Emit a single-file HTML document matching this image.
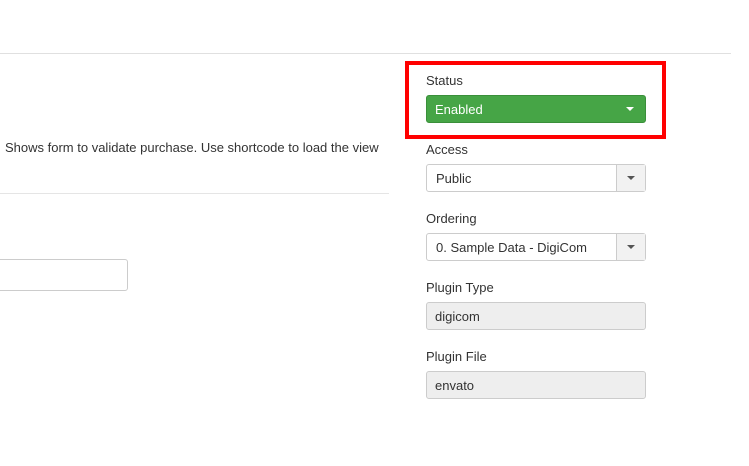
<!DOCTYPE html><html><head><style>
body{margin:0;width:749px;height:466px;background:#fff;font-family:"Liberation Sans",sans-serif;font-size:13px;color:#333;position:relative;overflow:hidden}
.a{position:absolute}
.lbl{position:absolute;left:426px;font-size:13px;color:#333}
.sel{position:absolute;left:426px;width:218px;height:26px;border:1px solid #ccc;border-radius:3px;box-sizing:content-box;background:#fff}
.sel span{position:absolute;left:9px;top:6px}
.sel .btn{position:absolute;right:0;top:0;width:28px;height:26px;border-left:1px solid #ccc;background:#f2f2f2}
.sel .btn:after{content:"";position:absolute;left:10px;top:11px;border-left:4px solid transparent;border-right:4px solid transparent;border-top:4px solid #555}
.ro{position:absolute;left:426px;width:218px;height:26px;border:1px solid #ccc;border-radius:3px;background:#eee}
.ro span{position:absolute;left:8px;top:6px}
</style></head><body>
<div class="a" style="left:0;top:53px;width:731px;height:1px;background:#e0e0e0"></div>
<div class="a" style="left:5px;top:140px;color:#333">Shows form to validate purchase. Use shortcode to load the view</div>
<div class="a" style="left:0;top:193px;width:389px;height:1px;background:#e5e5e5"></div>
<div class="a" style="left:-4px;top:259px;width:130px;height:30px;border:1px solid #ccc;border-radius:3px"></div>
<div class="a" style="left:405px;top:61px;width:253px;height:70px;border:4px solid #f00"></div>
<div class="lbl" style="top:73px">Status</div>
<div class="a" style="left:426px;top:95px;width:218px;height:26px;background:#46a546;border:1px solid #3a8f3a;border-radius:3px;color:#fff">
<span class="a" style="left:8px;top:6px;color:#fff">Enabled</span>
<span class="a" style="right:11px;top:11px;border-left:4px solid transparent;border-right:4px solid transparent;border-top:4px solid #fff;width:0;height:0"></span></div>
<div class="lbl" style="top:142px">Access</div>
<div class="sel" style="top:164px"><span>Public</span><div class="btn"></div></div>
<div class="lbl" style="top:211px">Ordering</div>
<div class="sel" style="top:233px"><span>0. Sample Data - DigiCom</span><div class="btn"></div></div>
<div class="lbl" style="top:280px">Plugin Type</div>
<div class="ro" style="top:302px"><span>digicom</span></div>
<div class="lbl" style="top:349px">Plugin File</div>
<div class="ro" style="top:371px"><span>envato</span></div>
</body></html>
